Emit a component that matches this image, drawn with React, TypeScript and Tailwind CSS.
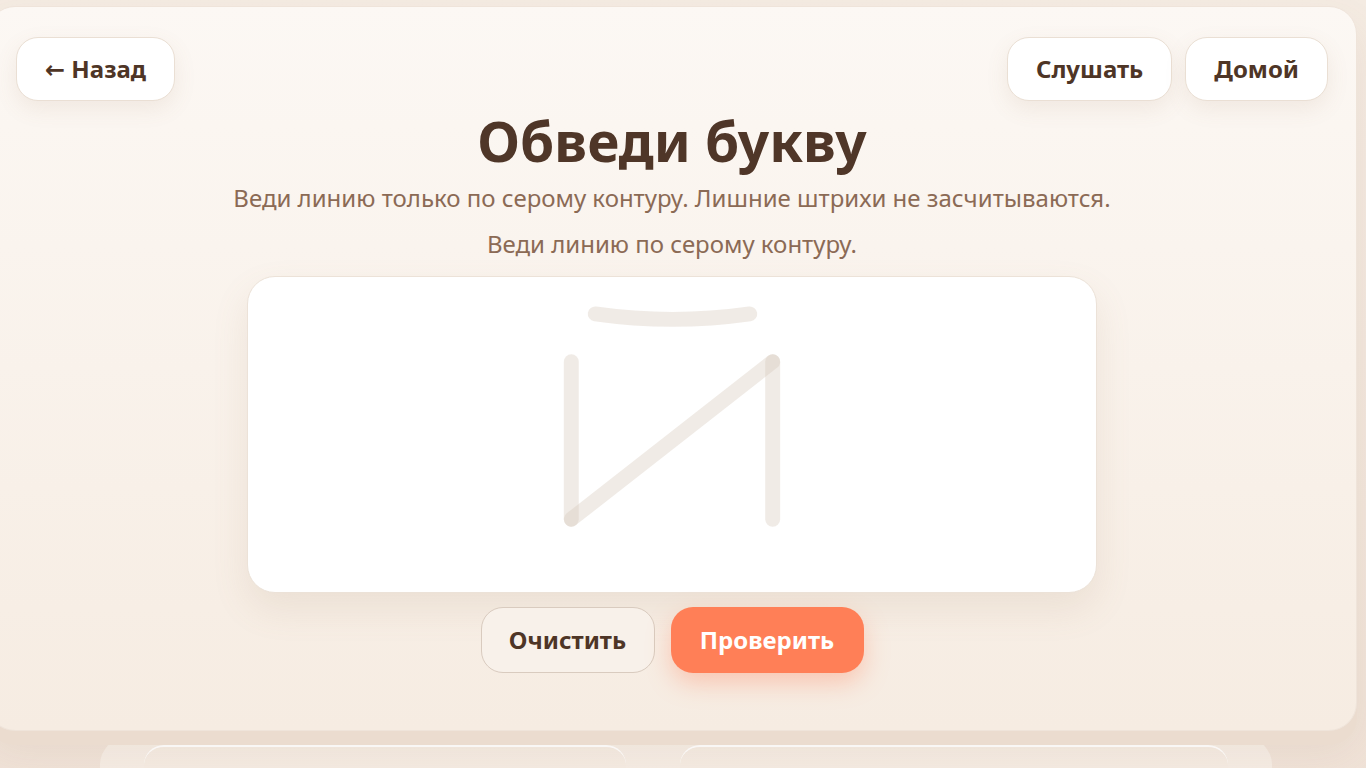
import * as React from "react"

const font = { fontFamily: '"Noto Sans", "DejaVu Sans", sans-serif' }

function TraceLetter() {
  return (
    <svg viewBox="0 0 848 316" className="h-full w-full">
      <g
        fill="none"
        stroke="rgb(214,200,186)"
        strokeOpacity="0.36"
        strokeWidth="15"
        strokeLinecap="round"
      >
        <path d="M347 37 Q424.5 48 502 37" />
        <path d="M323 85 L323 243" />
        <path d="M525 85 L525 243" />
        <path d="M323 243 L525 85" />
      </g>
    </svg>
  )
}

function PillButton({ children }: { children: React.ReactNode }) {
  return (
    <button className="flex h-16 items-center justify-center rounded-[22px] border border-[#eadfd4] bg-white px-7 text-[24px] font-bold text-[#4e3526] shadow-[0_8px_22px_rgba(150,110,80,0.10)]">
      {children}
    </button>
  )
}

export default function App() {
  return (
    <div
      className="min-h-screen overflow-hidden bg-gradient-to-b from-[#f4ebe2] to-[#efe1d6]"
      style={font}
    >
      <div className="pt-[6px]">
        {/* Main trace card */}
        <div className="relative z-10 ml-[-13px] w-[1370px] rounded-[28px] border border-[#efe4da] bg-gradient-to-b from-[#fcf8f4] to-[#f6ece2] px-[28px] pb-[57px] pt-[30px] shadow-[0_14px_0_#ebdccf,0_20px_40px_rgba(160,120,90,0.10)]">
          <div className="flex items-start justify-between">
            <PillButton>← Назад</PillButton>
            <div className="flex gap-[13px]">
              <PillButton>Слушать</PillButton>
              <PillButton>Домой</PillButton>
            </div>
          </div>

          <div className="flex flex-col items-center">
            <h1 className="mt-[10px] text-[55px] font-bold leading-[1.1] text-[#4f3628]">
              Обведи букву
            </h1>
            <p className="mt-[10px] text-[24px] leading-[32px] text-[#8b6a55]">
              Веди линию только по серому контуру. Лишние штрихи не засчитываются.
            </p>
            <p className="mt-[14px] text-[24px] leading-[32px] text-[#8b6a55]">
              Веди линию по серому контуру.
            </p>

            <div className="mt-[16px] h-[317px] w-[850px] overflow-hidden rounded-[28px] border border-[#ece2d8] bg-white shadow-[0_16px_36px_rgba(160,120,90,0.12)]">
              <TraceLetter />
            </div>

            <div className="mt-[14px] flex gap-[16px]">
              <button className="flex h-[66px] w-[174px] items-center justify-center rounded-[22px] border border-[#d9cbbf] bg-[#f8f1ea] text-[24px] font-bold text-[#4e3526]">
                Очистить
              </button>
              <button className="flex h-[66px] w-[193px] items-center justify-center rounded-[22px] bg-[#ff7f57] text-[24px] font-bold text-white shadow-[0_10px_24px_rgba(255,127,87,0.35)]">
                Проверить
              </button>
            </div>
          </div>
        </div>

        {/* Content behind the card */}
        <div className="ml-[100px] mt-[6px] flex w-[1172px] gap-[54px] rounded-[28px] bg-gradient-to-b from-[#f6eee6] to-[#f1e5db] px-[44px] pt-[8px]">
          <div className="h-[120px] w-[482px] rounded-t-[20px] border-t-2 border-white bg-gradient-to-b from-[#f5ece3] to-[#f2e6dc]" />
          <div className="h-[120px] w-[548px] rounded-t-[20px] border-t-2 border-white bg-gradient-to-b from-[#f5ece3] to-[#f2e6dc]" />
        </div>
      </div>
    </div>
  )
}
